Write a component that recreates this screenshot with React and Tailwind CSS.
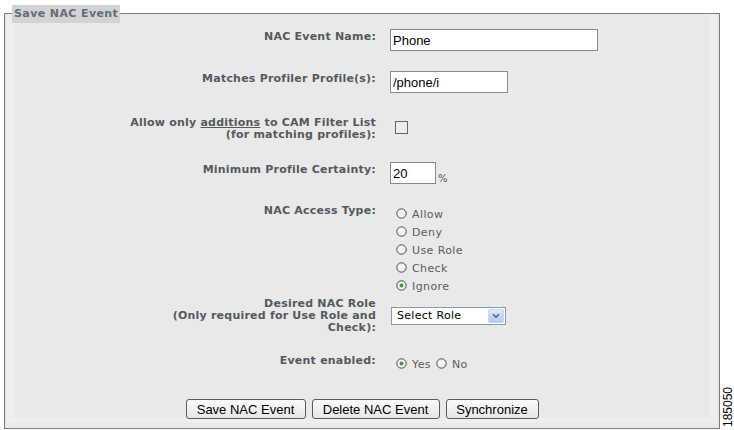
import React from "react";

const LABEL = "w-[364px] shrink-0 text-right font-bold text-[11px] tracking-[0.22px] text-[#55595e]";
const FONT_V = { fontFamily: '"DejaVu Sans", Verdana, sans-serif' };

function Radio({ checked }) {
  return (
    <svg width="11" height="11" viewBox="0 0 11 11" className="shrink-0">
      <circle cx="5.5" cy="5.5" r="4.7" fill="#f4f4f4" stroke="#4a4a4a" strokeWidth="1" />
      {checked && <circle cx="5.5" cy="5.5" r="1.9" fill="#3f9b3f" />}
    </svg>
  );
}

function RadioLine({ label, checked }) {
  return (
    <div className="flex items-center h-[18px]">
      <span className="ml-[6px]">
        <Radio checked={checked} />
      </span>
      <span className="ml-[5px] text-[11px] tracking-[0.4px] text-[#5c5c5c] leading-none pt-[2px]">{label}</span>
    </div>
  );
}

function Btn({ children, w }) {
  return (
    <button
      className={`h-[20px] ${w} rounded-[3px] border border-[#5a5a5a] bg-gradient-to-b from-[#fbfbfb] to-[#e6e6e6] text-[13px] text-black leading-none`}
      style={{ fontFamily: '"Liberation Sans", Arial, sans-serif' }}
    >
      {children}
    </button>
  );
}

export default function App() {
  const inputCls =
    "h-[22px] border border-[#8a8a8a] bg-white pl-[2px] text-[13px] text-black outline-none";
  const inputFont = { fontFamily: '"Liberation Sans", Arial, sans-serif' };

  return (
    <div className="w-[734px] h-[430px] bg-white flex pt-[13px] pl-[4px] overflow-hidden" style={FONT_V}>
      <div className="relative w-[716px] h-[416px] border border-[#7a7a7a] bg-[#e9e9e9]">
        <div className="pointer-events-none absolute left-[2px] right-[2px] top-0 bottom-[5px] border-l-[8px] border-r-[8px] border-b-[5px] border-[#eeeeee]" />
        <span className="absolute left-[7px] top-[-9px] bg-[#d3d3d3] px-[2px] h-[18px] leading-[18px] text-[11px] tracking-[0.4px] font-bold text-[#5f6d7a]">
          Save NAC Event
        </span>

        <div className="relative pl-[7px]">
          {/* event name */}
          <div className="flex items-start mt-[15px]">
            <div className={`${LABEL} pt-[1px] leading-[14px]`}>NAC Event Name:</div>
            <input readOnly value="Phone" className={`${inputCls} ml-[14px] w-[208px]`} style={inputFont} />
          </div>

          {/* profiles */}
          <div className="flex items-start mt-[20px]">
            <div className={`${LABEL} pt-[1px] leading-[14px]`}>Matches Profiler Profile(s):</div>
            <input readOnly value="/phone/i" className={`${inputCls} ml-[14px] w-[118px]`} style={inputFont} />
          </div>

          {/* additions */}
          <div className="flex items-start mt-[24px]">
            <div className={`${LABEL} leading-[12px]`}>
              Allow only <span className="underline">additions</span> to CAM Filter List
              <br />
              (for matching profiles):
            </div>
            <div className="ml-[19px] mt-[4px] w-[13px] h-[13px] border border-[#666] bg-[#ececec]" />
          </div>

          {/* certainty */}
          <div className="flex items-start mt-[21px]">
            <div className={`${LABEL} pt-[1px] leading-[14px]`}>Minimum Profile Certainty:</div>
            <input readOnly value="20" className={`${inputCls} ml-[14px] w-[46px]`} style={inputFont} />
            <span className="ml-[2px] mt-[9px] text-[10px] text-[#555]">%</span>
          </div>

          {/* access type */}
          <div className="flex items-start mt-[18px]">
            <div className={`${LABEL} leading-[14px]`}>NAC Access Type:</div>
            <div className="ml-[14px] flex flex-col">
              <RadioLine label="Allow" />
              <RadioLine label="Deny" />
              <RadioLine label="Use Role" />
              <RadioLine label="Check" />
              <RadioLine label="Ignore" checked />
            </div>
          </div>

          {/* role */}
          <div className="flex items-start mt-[4px]">
            <div className={`${LABEL} leading-[12px]`}>
              Desired NAC Role
              <br />
              (Only required for Use Role and
              <br />
              Check):
            </div>
            <div className="ml-[15px] mt-[9px] w-[115px] h-[18px] border border-[#7f9db9] bg-white flex items-center justify-between">
              <span className="pl-[5px] text-[11px] tracking-[0.3px] text-black">Select Role</span>
              <span className="mr-[1px] w-[16px] h-[14px] rounded-[2px] bg-gradient-to-b from-[#dde7fb] to-[#b4c8f0] border border-[#c3d3fd] flex items-center justify-center">
                <svg width="8" height="6" viewBox="0 0 8 6">
                  <path d="M1 1.2 L4 4.2 L7 1.2" fill="none" stroke="#4d6185" strokeWidth="1.6" />
                </svg>
              </span>
            </div>
          </div>

          {/* enabled */}
          <div className="flex items-start mt-[20px]">
            <div className={`${LABEL} leading-[14px]`}>Event enabled:</div>
            <div className="ml-[14px] flex">
              <RadioLine label="Yes" checked />
              <span className="ml-[-1px]">
                <RadioLine label="No" />
              </span>
            </div>
          </div>

          {/* buttons */}
          <div className="flex justify-center gap-[6px] mt-[27px] pr-[7px]">
            <Btn w="w-[120px]">Save NAC Event</Btn>
            <Btn w="w-[128px]">Delete NAC Event</Btn>
            <Btn w="w-[93px]">Synchronize</Btn>
          </div>
        </div>
      </div>

      <div className="ml-[2px] flex items-end pb-[3px]">
        <span
          className="[writing-mode:vertical-rl] rotate-180 text-[12px] leading-[12px] text-black"
          style={{ fontFamily: '"Liberation Sans", Arial, sans-serif' }}
        >
          185050
        </span>
      </div>
    </div>
  );
}
